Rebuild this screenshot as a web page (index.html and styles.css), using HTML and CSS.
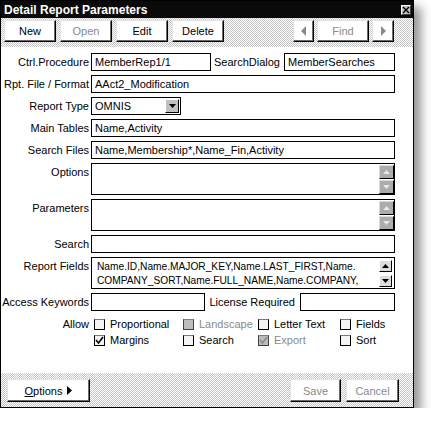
FILE: index.html
```html
<!DOCTYPE html>
<html>
<head>
<meta charset="utf-8">
<link rel="stylesheet" href="styles.css">
</head>
<body>
<div class="window">
  <div class="titlebar">
    <span class="title">Detail Report Parameters</span>
    <span class="close"><svg width="8" height="8" viewBox="0 0 8 8"><path d="M1 1L7 7M7 1L1 7" stroke="#000" stroke-width="1.4"/></svg></span>
  </div>
  <div class="toolbar checker">
    <button class="btn">New</button>
    <button class="btn disabled">Open</button>
    <button class="btn">Edit</button>
    <button class="btn">Delete</button>
    <div class="nav">
      <button class="btn arrow arrow-l"><svg width="6" height="10" viewBox="0 0 6 10"><path d="M5 0V10L0 5Z" fill="#8a8a8a"/></svg></button>
      <button class="btn disabled">Find</button>
      <button class="btn arrow arrow-r"><svg width="6" height="10" viewBox="0 0 6 10"><path d="M1 0V10L6 5Z" fill="#8a8a8a"/></svg></button>
    </div>
  </div>
  <div class="content">
    <div class="form">
      <div class="label">Ctrl.Procedure</div>
      <div class="row">
        <div class="field w-ctrl">MemberRep1/1</div>
        <div class="inlabel">SearchDialog</div>
        <div class="field w-dialog">MemberSearches</div>
      </div>

      <div class="label">Rpt. File / Format</div>
      <div class="field">AAct2_Modification</div>

      <div class="label">Report Type</div>
      <div class="row">
        <div class="field combo">
          <span class="combo-text">OMNIS</span>
          <span class="combo-btn"><svg width="7" height="4" viewBox="0 0 7 4"><path d="M0 0H7L3.5 4Z" fill="#000"/></svg></span>
        </div>
      </div>

      <div class="label">Main Tables</div>
      <div class="field">Name,Activity</div>

      <div class="label">Search Files</div>
      <div class="field">Name,Membership*,Name_Fin,Activity</div>

      <div class="label top">Options</div>
      <div class="field multi">
        <div class="multi-text"></div>
        <div class="scroll dim">
          <span class="sbtn"><svg width="7" height="4" viewBox="0 0 7 4"><path d="M3.5 0L7 4H0Z" fill="#e8e8e8"/></svg></span>
          <span class="sbtn"><svg width="7" height="4" viewBox="0 0 7 4"><path d="M0 0H7L3.5 4Z" fill="#e8e8e8"/></svg></span>
        </div>
      </div>

      <div class="label top">Parameters</div>
      <div class="field multi">
        <div class="multi-text"></div>
        <div class="scroll dim">
          <span class="sbtn"><svg width="7" height="4" viewBox="0 0 7 4"><path d="M3.5 0L7 4H0Z" fill="#e8e8e8"/></svg></span>
          <span class="sbtn"><svg width="7" height="4" viewBox="0 0 7 4"><path d="M0 0H7L3.5 4Z" fill="#e8e8e8"/></svg></span>
        </div>
      </div>

      <div class="label">Search</div>
      <div class="field"></div>

      <div class="label top">Report Fields</div>
      <div class="field multi">
        <div class="multi-text fields-text">Name.ID,Name.MAJOR_KEY,Name.LAST_FIRST,Name.<br>COMPANY_SORT,Name.FULL_NAME,Name.COMPANY,</div>
        <div class="scroll live">
          <span class="sbtn"><svg width="7" height="4" viewBox="0 0 7 4"><path d="M3.5 0L7 4H0Z" fill="#000"/></svg></span>
          <span class="sbtn"><svg width="7" height="4" viewBox="0 0 7 4"><path d="M0 0H7L3.5 4Z" fill="#000"/></svg></span>
        </div>
      </div>

      <div class="label">Access Keywords</div>
      <div class="row">
        <div class="field w-access"></div>
        <div class="inlabel lic">License Required</div>
        <div class="field w-license"></div>
      </div>

      <div class="label check-label">Allow</div>
      <div class="checks">
        <label class="opt"><span class="cb"></span>Proportional</label>
        <label class="opt disabled"><span class="cb cb-dis"></span>Landscape</label>
        <label class="opt"><span class="cb"></span>Letter Text</label>
        <label class="opt"><span class="cb"></span>Fields</label>
        <label class="opt"><span class="cb"><svg width="9" height="9" viewBox="0 0 9 9"><path d="M1 4L3.5 7L8 1" stroke="#000" stroke-width="1.6" fill="none"/></svg></span>Margins</label>
        <label class="opt"><span class="cb"></span>Search</label>
        <label class="opt disabled"><span class="cb cb-dis"><svg width="9" height="9" viewBox="0 0 9 9"><path d="M1 4L3.5 7L8 1" stroke="#8a8a8a" stroke-width="1.6" fill="none"/></svg></span>Export</label>
        <label class="opt"><span class="cb"></span>Sort</label>
      </div>
    </div>
  </div>
  <div class="footer checker">
    <button class="btn btn-options"><span><u>O</u>ptions</span><svg width="5" height="9" viewBox="0 0 5 9"><path d="M0 0V9L5 4.5Z" fill="#000"/></svg></button>
    <button class="btn disabled btn-save">Save</button>
    <button class="btn disabled btn-cancel">Cancel</button>
  </div>
</div>
</body>
</html>
```

FILE: styles.css
```css
* { box-sizing: border-box; }

body {
  margin: 0;
  background: #fff;
  font: 11px "Liberation Sans", Arial, sans-serif;
  color: #000;
}

.window {
  width: 414px;
  height: 408px;
  border: 1px solid #000;
  display: flex;
  flex-direction: column;
  background: #fff;
  box-shadow: 7px 7px 10px rgba(0, 0, 0, 0.42);
}

.checker {
  background: repeating-conic-gradient(#c4c4c4 0 25%, #fff 0 50%) 0 0 / 2px 2px;
}

.titlebar {
  height: 17px;
  flex: none;
  background: #0a0a0a;
  color: #fff;
  display: flex;
  align-items: center;
  padding-left: 3px;
  font-weight: bold;
  font-size: 12px;
}

.close {
  margin-left: auto;
  margin-right: 2px;
  width: 10px;
  height: 10px;
  background: #c0c0c0;
  border: 1px solid;
  border-color: #fff #404040 #404040 #fff;
  display: flex;
  align-items: center;
  justify-content: center;
}

.toolbar {
  height: 29px;
  flex: none;
  display: flex;
  gap: 4px;
  padding: 2px 19px 0 3px;
  align-items: flex-start;
}

.btn {
  font: inherit;
  color: #000;
  width: 52px;
  height: 22px;
  padding: 0;
  margin: 0;
  background: #fff;
  border: 1px solid;
  border-color: #e4e4e4 #000 #000 #e4e4e4;
  box-shadow: inset -1px -1px 0 #6a6a6a;
  display: flex;
  align-items: center;
  justify-content: center;
}

.btn.disabled { color: #8a8a8a; }

.nav {
  margin-left: auto;
  display: flex;
  gap: 3px;
}

.arrow-l { width: 21px; }
.arrow-r { width: 22px; }

.content {
  flex: 1;
  padding-top: 6px;
}

.form {
  display: grid;
  grid-template-columns: 90px 304px;
  row-gap: 4px;
}

.label {
  text-align: right;
  padding-right: 2px;
  white-space: nowrap;
  height: 18px;
  line-height: 18px;
}

.label.top { line-height: 16px; padding-top: 1px; }

.row {
  display: flex;
  align-items: center;
}

.field {
  height: 18px;
  border: 1px solid #000;
  background: #fff;
  padding: 0 3px;
  line-height: 16px;
  white-space: nowrap;
  overflow: hidden;
}

.w-ctrl { width: 120px; }
.w-dialog { width: 111px; }
.w-access { width: 114px; }
.w-license { width: 95px; }

.inlabel {
  flex: 1;
  text-align: right;
  padding-right: 4px;
  white-space: nowrap;
}

.inlabel.lic { padding-right: 5px; }

.combo {
  width: 90px;
  display: flex;
  align-items: center;
  padding-right: 1px;
}

.combo-text { flex: 1; }

.combo-btn {
  width: 14px;
  height: 14px;
  background: #c0c0c0;
  border: 1px solid;
  border-color: #fff #000 #000 #fff;
  display: flex;
  align-items: center;
  justify-content: center;
}

.multi {
  height: 32px;
  display: flex;
  padding-right: 0;
}

.multi-text {
  flex: 1;
  white-space: nowrap;
  line-height: 14px;
  padding-top: 2px;
  padding-left: 2px;
}

.fields-text {
  font-size: 10.2px;
}

.scroll {
  display: flex;
  flex-direction: column;
}

.scroll.dim {
  padding-top: 1px;
  gap: 1px;
}

.scroll.dim .sbtn {
  width: 15px;
  height: 14px;
  background: #acacac;
  border: 1px solid;
  border-color: #dcdcdc #000 #000 #dcdcdc;
}

.scroll.live {
  padding: 2px 2px 0 0;
  gap: 3px;
}

.scroll.live .sbtn {
  width: 13px;
  height: 12px;
  background: #dcdcdc;
  border: 1px solid;
  border-color: #fff #000 #000 #fff;
}

.sbtn {
  display: flex;
  align-items: center;
  justify-content: center;
}

.check-label {
  height: 16px;
  line-height: 16px;
  margin-top: 1px;
}

.checks {
  display: grid;
  grid-template-columns: 89px 75px 82px auto;
  grid-auto-rows: 16px;
  padding-left: 3px;
  margin-top: 1px;
}

.opt {
  display: flex;
  align-items: center;
  gap: 5px;
  white-space: nowrap;
}

.opt.disabled { color: #8a8a8a; }

.cb {
  width: 11px;
  height: 11px;
  background: #f4f4f4;
  border: 1px solid;
  border-color: #7a7a7a #000 #000 #000;
  display: flex;
  align-items: center;
  justify-content: center;
}

.cb-dis { background: #bcbcbc; border-color: #808080 #404040 #404040 #404040; }

.footer {
  height: 34px;
  flex: none;
  display: flex;
  gap: 5px;
  padding: 6px 14px 0 6px;
  align-items: flex-start;
}

.footer .btn { height: 23px; }

.btn-options {
  width: 83px;
  gap: 5px;
}

.btn-save { width: 51px; margin-left: auto; }
.btn-cancel { width: 53px; }
```
